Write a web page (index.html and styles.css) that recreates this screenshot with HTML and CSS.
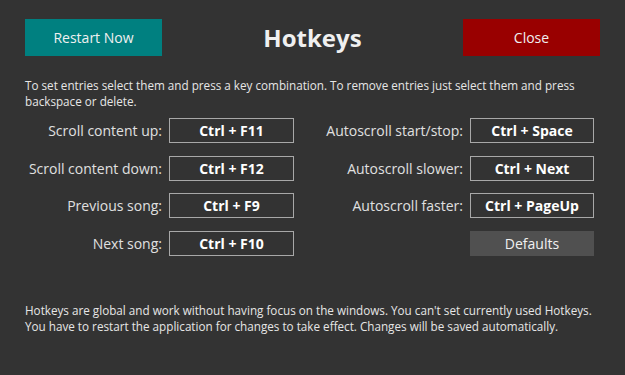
FILE: index.html
```html
<!DOCTYPE html>
<html lang="en">

<head>
    <meta charset="UTF-8">
    <meta name="viewport" content="width=device-width, initial-scale=1.0">
    <title>Hotkeys</title>
    <link rel="stylesheet" href="styles.css">
</head>

<body>
    <div class="window">
        <!-- Header -->
        <div class="header">
            <button class="btn btn-restart">Restart Now</button>
            <h1>Hotkeys</h1>
            <button class="btn btn-close">Close</button>
        </div>

        <p class="hint">To set entries select them and press a key combination. To remove entries just select them and press backspace or delete.</p>

        <!-- Hotkey list -->
        <div class="keys">
            <label>Scroll content up:</label>
            <div class="key">Ctrl + F11</div>
            <label>Autoscroll start/stop:</label>
            <div class="key">Ctrl + Space</div>

            <label>Scroll content down:</label>
            <div class="key">Ctrl + F12</div>
            <label>Autoscroll slower:</label>
            <div class="key">Ctrl + Next</div>

            <label>Previous song:</label>
            <div class="key">Ctrl + F9</div>
            <label>Autoscroll faster:</label>
            <div class="key">Ctrl + PageUp</div>

            <label>Next song:</label>
            <div class="key">Ctrl + F10</div>
            <span></span>
            <button class="btn btn-defaults">Defaults</button>
        </div>

        <p class="hint footer">Hotkeys are global and work without having focus on the windows. You can't set currently used Hotkeys. You have to restart the application for changes to take effect. Changes will be saved automatically.</p>
    </div>
</body>

</html>
```

FILE: styles.css
```css
body {
    margin: 0;
    background-color: #333333;
    color: #e6e6e6;
    font-family: "Open Sans", "Noto Sans", sans-serif;
}

.window {
    padding: 19px 25px;
}

.header {
    display: flex;
    justify-content: space-between;
    align-items: center;
}

.header h1 {
    margin: 0;
    font-size: 24px;
    font-weight: bold;
    color: #f0f0f0;
}

.btn {
    border: none;
    font-family: inherit;
    color: #f0f0f0;
    cursor: pointer;
}

.btn-restart,
.btn-close {
    width: 137px;
    height: 37px;
    font-size: 14px;
}

.btn-restart {
    background-color: #008080;
}

.btn-close {
    background-color: #990000;
}

.hint {
    margin: 21px 0 0;
    font-size: 11.7px;
    line-height: 16px;
}

.keys {
    display: grid;
    grid-template-columns: 137px 125px 162px 124px;
    column-gap: 7px;
    row-gap: 12.5px;
    margin-top: 9px;
    align-items: center;
}

.keys label {
    text-align: right;
    font-size: 14px;
    color: #e0e0e0;
}

.key {
    height: 23px;
    border: 1px solid #a8a8a8;
    line-height: 23px;
    text-align: center;
    font-weight: bold;
    font-size: 14px;
    color: #ffffff;
}

.btn-defaults {
    height: 25px;
    background-color: #505050;
    font-size: 14px;
}

.footer {
    margin-top: 46px;
}
```
